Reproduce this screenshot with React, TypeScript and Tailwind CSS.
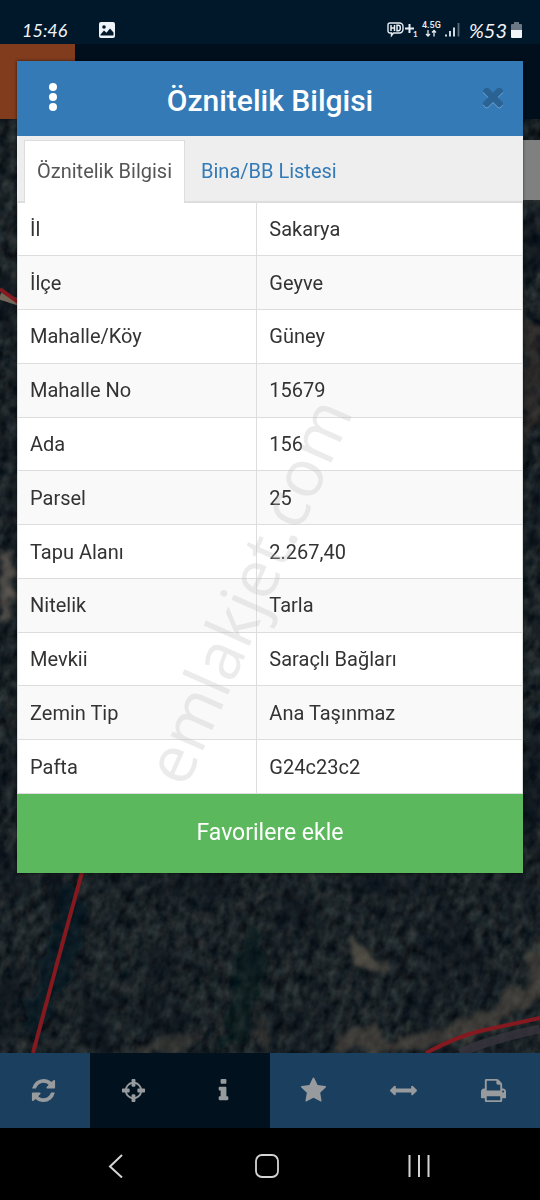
import { useState } from 'react';

interface Attribute {
  label: string;
  value: string;
}

const attributes: Attribute[] = [
  { label: 'İl', value: 'Sakarya' },
  { label: 'İlçe', value: 'Geyve' },
  { label: 'Mahalle/Köy', value: 'Güney' },
  { label: 'Mahalle No', value: '15679' },
  { label: 'Ada', value: '156' },
  { label: 'Parsel', value: '25' },
  { label: 'Tapu Alanı', value: '2.267,40' },
  { label: 'Nitelik', value: 'Tarla' },
  { label: 'Mevkii', value: 'Saraçlı Bağları' },
  { label: 'Zemin Tip', value: 'Ana Taşınmaz' },
  { label: 'Pafta', value: 'G24c23c2' },
];

const tools = [
  {
    name: 'Yenile', width: 1536, active: false,
    d: 'M1511 1056q0 5-1 7-64 268-268 434.5t-478 166.5q-146 0-282.5-55t-243.5-157l-129 129q-19 19-45 19t-45-19-19-45v-448q0-26 19-45t45-19h448q26 0 45 19t19 45-19 45l-137 137q71 66 161 102t187 36q134 0 250-65t186-179q11-17 53-117 8-23 30-23h192q13 0 22.5 9.5t9.5 22.5zm25-800v448q0 26-19 45t-45 19h-448q-26 0-45-19t-19-45 19-45l138-138q-148-137-349-137-134 0-250 65t-186 179q-11 17-53 117-8 23-30 23h-199q-13 0-22.5-9.5t-9.5-22.5v-7q65-268 270-434.5t480-166.5q146 0 284 55.5t245 156.5l130-129q19-19 45-19t45 19 19 45z',
  },
  {
    name: 'Konum', width: 1536, active: true,
    d: 'M1197 1024h-109q-26 0-45-19t-19-45v-128q0-26 19-45t45-19h109q-32-108-112.5-188.5t-188.5-112.5v109q0 26-19 45t-45 19h-128q-26 0-45-19t-19-45v-109q-108 32-188.5 112.5t-112.5 188.5h109q26 0 45 19t19 45v128q0 26-19 45t-45 19h-109q32 108 112.5 188.5t188.5 112.5v-109q0-26 19-45t45-19h128q26 0 45 19t19 45v109q108-32 188.5-112.5t112.5-188.5zm339-192v128q0 26-19 45t-45 19h-143q-37 161-154.5 278.5t-278.5 154.5v143q0 26-19 45t-45 19h-128q-26 0-45-19t-19-45v-143q-161-37-278.5-154.5t-154.5-278.5h-143q-26 0-45-19t-19-45v-128q0-26 19-45t45-19h143q37-161 154.5-278.5t278.5-154.5v-143q0-26 19-45t45-19h128q26 0 45 19t19 45v143q161 37 278.5 154.5t154.5 278.5h143q26 0 45 19t19 45z',
  },
  {
    name: 'Bilgi', width: 640, active: true,
    d: 'M640 1344v128q0 26-19 45t-45 19h-512q-26 0-45-19t-19-45v-128q0-26 19-45t45-19h64v-384h-64q-26 0-45-19t-19-45v-128q0-26 19-45t45-19h384q26 0 45 19t19 45v576h64q26 0 45 19t19 45zm-128-1152v192q0 26-19 45t-45 19h-256q-26 0-45-19t-19-45v-192q0-26 19-45t45-19h256q26 0 45 19t19 45z',
  },
  {
    name: 'Favoriler', width: 1664, active: false,
    d: 'M1664 647q0 22-26 48l-363 354 86 500q1 7 1 20 0 21-10.5 35.5t-30.5 14.5q-19 0-40-12l-449-236-449 236q-22 12-40 12-21 0-31.5-14.5t-10.5-35.5q0-6 2-20l86-500-364-354q-25-27-25-48 0-37 56-46l502-73 225-455q19-41 49-41t49 41l225 455 502 73q56 9 56 46z',
  },
  {
    name: 'Ölçüm', width: 1792, active: false,
    d: 'M1792 896q0 26-19 45l-256 256q-19 19-45 19t-45-19-19-45v-128h-1024v128q0 26-19 45t-45 19-45-19l-256-256q-19-19-19-45t19-45l256-256q19-19 45-19t45 19 19 45v128h1024v-128q0-26 19-45t45-19 45 19l256 256q19 19 19 45z',
  },
  {
    name: 'Yazdır', width: 1664, active: false,
    d: 'M384 1536h896v-256h-896v256zm0-640h896v-384h-160q-40 0-68-28t-28-68v-160h-640v640zm1152 64q0-26-19-45t-45-19-45 19-19 45 19 45 45 19 45-19 19-45zm128 0v416q0 13-9.5 22.5t-22.5 9.5h-224v160q0 40-28 68t-68 28h-960q-40 0-68-28t-28-68v-160h-224q-13 0-22.5-9.5t-9.5-22.5v-416q0-79 56.5-135.5t135.5-56.5h64v-544q0-40 28-68t68-28h672q40 0 88 20t76 48l152 152q28 28 48 76t20 88v256h64q79 0 135.5 56.5t56.5 135.5z',
  },
];

const timesPath = 'M1298 1322q0 40-28 68l-136 136q-28 28-68 28t-68-28l-294-294-294 294q-28 28-68 28t-68-28l-136-136q-28-28-28-68t28-68l294-294-294-294q-28-28-28-68t28-68l136-136q28-28 68-28t68 28l294 294 294-294q28-28 68-28t68 28l136 136q28 28 28 68t-28 68l-294 294 294 294q28 28 28 68z';

function StatusBar() {
  return (
    <div className="flex h-11 items-end justify-between bg-[#01182b] pr-[18px] pl-[22px] font-['Lato',sans-serif] text-lg leading-7 italic text-slate-100">
      <div className="flex items-center gap-8">
        <span>15:46</span>
        <svg className="h-4 w-4" viewBox="0 0 16 16">
          <rect width="16" height="16" rx="2" fill="#eef3f8" />
          <circle cx="5" cy="5" r="1.8" fill="#01182b" />
          <path d="M1.500 12.500 5 8.500l2.500 2.300L11 6.500l3.500 4v3h-13z" fill="#01182b" />
        </svg>
      </div>
      <div className="flex items-center gap-2">
        <svg className="h-[18px] w-[74px]" viewBox="0 0 74 18" fill="none" stroke="#e6edf3">
          {/* HD call badge */}
          <path d="M3 2h9.500a3.500 3.500 0 0 1 3.500 3.500v3a3.500 3.500 0 0 1-3.500 3.500H6.500l-2 2.500V12H3a2 2 0 0 1-2-2V4a2 2 0 0 1 2-2z" strokeWidth="1.400" />
          <path d="M4 4v6M4 7h3.500M7.500 4v6M10 4.300v5.400h1.500q1.800 0 1.800-2.700t-1.800-2.700z" strokeWidth="1.500" />
          <path d="M18 7.500h9M22.500 3v9" strokeWidth="2" />
          <text x="26" y="16" fill="#e6edf3" stroke="none" fontSize="8" fontStyle="normal" fontWeight="700">1</text>
          <text x="35" y="7" fill="#e6edf3" stroke="none" fontSize="9" fontStyle="normal" fontWeight="500" fontFamily="Roboto">4.5G</text>
          <path d="M41 9v6M39 13l2 2 2-2M47 15.500v-6M45 11.500l2-2 2 2" strokeWidth="1.300" />
          <path d="M59 15.500v-2M63 15.500V10M67 15.500V6.500" strokeWidth="1.800" />
          <path d="M71.500 15.500V2" stroke="#5b6b7a" strokeWidth="1.800" />
        </svg>
        <div className="flex items-center gap-1">
          <span className="text-xl leading-7">%53</span>
          <svg className="h-4 w-[11px]" viewBox="0 0 11 16">
            <path d="M3 0h5v2h2a1 1 0 0 1 1 1v5H0V3a1 1 0 0 1 1-1h2z" fill="#6b7883" />
            <path d="M0 8h11v7a1 1 0 0 1-1 1H1a1 1 0 0 1-1-1z" fill="#f1f5f9" />
          </svg>
        </div>
      </div>
    </div>
  );
}

// Dimmed satellite imagery with parcel borders
function MapCanvas() {
  return (
    <svg className="absolute inset-0 h-full w-full" viewBox="0 0 540 934" preserveAspectRatio="xMidYMid slice" aria-hidden="true">
      <defs>
        <filter id="forest" x="0" y="0" width="100%" height="100%" colorInterpolationFilters="sRGB">
          <feTurbulence type="fractalNoise" baseFrequency="0.11 0.08" numOctaves="3" seed="12" />
          <feColorMatrix values="0.250 0.040 0 0 -0.040  0.250 0 0.030 0 -0.005  0.220 0 0.050 0 0.015  0 0 0 0 1" />
        </filter>
        <filter id="patches" x="0" y="0" width="100%" height="100%" colorInterpolationFilters="sRGB">
          <feTurbulence type="fractalNoise" baseFrequency="0.022 0.014" numOctaves="3" seed="31" />
          <feColorMatrix values="0 0 0 0 0.020  0 0 0 0 0.050  0 0 0 0 0.090  4 0 0 0 -1.900" />
        </filter>
        <filter id="soft" x="-50%" y="-50%" width="200%" height="200%">
          <feTurbulence type="fractalNoise" baseFrequency="0.06" numOctaves="3" seed="5" result="n" />
          <feDisplacementMap in="SourceGraphic" in2="n" scale="26" xChannelSelector="R" yChannelSelector="G" />
          <feGaussianBlur stdDeviation="2" />
        </filter>
      </defs>
      <rect width="540" height="934" fill="#1e2529" />
      <g transform="rotate(18 270 467) translate(-300 -200)">
        <rect width="1140" height="1334" filter="url(#forest)" />
      </g>
      <rect width="540" height="934" filter="url(#patches)" opacity="0.45" />
      <g filter="url(#soft)">
        <path d="M66 760l24 30-20 70-30 60-20-10 24-70z" fill="#08131f" opacity="0.5" />
        <path d="M236 840l20-40 10 50-20 70-26 10z" fill="#08131f" opacity="0.4" />
        <path d="M345 822l10-4 30 30-14 8z" fill="#6b6152" opacity="0.6" />
        <path d="M335 932l10-30 40 16 50-6 50-20 40-30 10-40 12-5v60l-70 40-70 15z" fill="#5f574b" opacity="0.5" />
        <path d="M255 920l6-24 10 10-2 20zM130 932l30-14 40-2-10 18z" fill="#584e46" opacity="0.4" />
        <path d="M0 430l10 4 6 24-10 40-6 6z" fill="#75695f" opacity="0.6" />
        <path d="M522 190l18 20v90l-18 30z" fill="#43302c" opacity="0.45" />
      </g>
      <path d="M460 934q30-14 80-24" stroke="#38353d" strokeWidth="9" fill="none" opacity="0.8" />
      <path d="M0 177l18 6" stroke="#706759" strokeWidth="7" />
      <path d="M0 170l18 13M83 750L62 826 33 934M426 934q30-16 54-22l60-13" stroke="#84191f" strokeWidth="4" fill="none" />
    </svg>
  );
}

function AttributeDialog() {
  const [tab, setTab] = useState('info');

  return (
    <div role="dialog" aria-labelledby="dialog-title" className="absolute inset-x-[17px] top-[61px] bg-white shadow-[0_0_3px_rgba(0,0,0,0.6)]">
      {/* Title bar */}
      <div className="flex h-[75px] items-center justify-between bg-[#337ab7] px-[18px]">
        <button aria-label="Menü" className="flex h-10 w-9 flex-col items-center justify-center gap-[2px] pb-1">
          <span className="h-2 w-2 rounded-full bg-white" />
          <span className="h-2 w-2 rounded-full bg-white" />
          <span className="h-2 w-2 rounded-full bg-white" />
        </button>
        <h1 id="dialog-title" className="pt-1 text-[30px] leading-9 font-medium text-white">Öznitelik Bilgisi</h1>
        <button aria-label="Kapat" className="flex h-10 w-9 items-center justify-end pr-[2px]">
          <svg className="h-[22px] w-[22px]" viewBox="0 430 1288 1260">
            <path d={timesPath} fill="#6ea3d0" transform="translate(0 60)" />
            <path d={timesPath} fill="#296293" />
          </svg>
        </button>
      </div>

      {/* Tabs */}
      <div role="tablist" className="flex h-[67px] items-stretch border-b-2 border-[#dddddd] bg-[#eeeeee] pt-1 pl-[7px] text-[20px]">
        <button
          role="tab"
          aria-selected={tab === 'info'}
          onClick={() => setTab('info')}
          className="-mb-[2px] border border-b-0 border-[#dddddd] bg-white px-3 pb-[3px] text-[#555555]"
        >
          Öznitelik Bilgisi
        </button>
        <button role="tab" aria-selected={tab === 'list'} onClick={() => setTab('list')} className="px-4 text-[#337ab7]">
          Bina/BB Listesi
        </button>
      </div>

      <table className="h-[591px] w-full table-fixed border-collapse text-left text-[20px] leading-7 text-[#333333]">
        <tbody>
          {attributes.map((a) => (
            <tr key={a.label} className="border-b border-[#dddddd] even:bg-[#f9f9f9]">
              <th scope="row" className="w-[47.4%] border-x border-[#dddddd] px-3 font-normal">{a.label}</th>
              <td className="border-r border-[#dddddd] px-3">{a.value}</td>
            </tr>
          ))}
        </tbody>
      </table>

      <button className="block h-[79px] w-full bg-[#5cb85c] text-[23px] text-white">Favorilere ekle</button>

      {/* Watermark */}
      <div className="pointer-events-none absolute top-[529px] left-[229px] -translate-x-1/2 -translate-y-1/2 -rotate-66 font-['Open_Sans',sans-serif] text-[66px] leading-none text-[#bcbcbc]/30">
        emlakjet.com
      </div>
    </div>
  );
}

export default function App() {
  return (
    <div className="relative flex min-h-screen flex-col overflow-hidden bg-black font-['Roboto',sans-serif]">
      <StatusBar />
      <header className="flex h-[75px] bg-[#010f1c]">
        <div className="w-[75px] bg-[#813b1d]" />
      </header>
      <main className="relative flex-1">
        <MapCanvas />
        <div className="absolute top-[21px] right-0 h-[60px] w-10 bg-[#808080]" />
      </main>

      <nav className="grid h-[75px] grid-cols-6 bg-[#1b3f5f]">
        {tools.map((t) => (
          <button key={t.name} aria-label={t.name} className={`flex items-center justify-center pr-[3px] ${t.active ? 'bg-[#01111d]' : 'bg-[#1b3f5f]'}`}>
            <svg className="h-[27px] w-[27px]" viewBox={`${(t.width - 1792) / 2} 0 1792 1792`} fill="#989b9e">
              <path d={t.d} />
            </svg>
          </button>
        ))}
      </nav>

      {/* Android navigation */}
      <nav className="flex h-[72px] items-center justify-around bg-black pt-1 pr-[45px] pl-10">
        <button aria-label="Geri" className="flex w-12 justify-center">
          <svg className="h-6 w-4" viewBox="0 0 16 24" fill="none" stroke="#d4d4d4" strokeWidth="2">
            <path d="M14 1 2 12.500 14 23.500" />
          </svg>
        </button>
        <button aria-label="Ana ekran" className="flex w-12 justify-center">
          <svg className="h-6 w-6" viewBox="0 0 24 24" fill="none" stroke="#d4d4d4" strokeWidth="1.800">
            <rect x="1" y="1" width="22" height="22" rx="6" />
          </svg>
        </button>
        <button aria-label="Son uygulamalar" className="flex w-12 justify-center">
          <svg className="h-6 w-6" viewBox="0 0 24 24" stroke="#d4d4d4" strokeWidth="2">
            <path d="M2.500 1v22M12 1v22M21.500 1v22" />
          </svg>
        </button>
      </nav>

      <AttributeDialog />
    </div>
  );
}
